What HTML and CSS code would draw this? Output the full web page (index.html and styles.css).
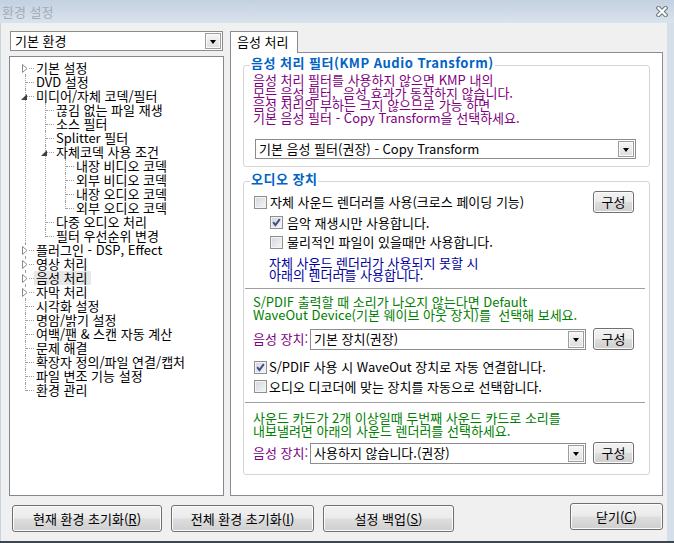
FILE: index.html
```html
<!DOCTYPE html>
<html lang="ko">
<head>
<meta charset="utf-8">
<title>환경 설정</title>
<link rel="stylesheet" href="styles.css">
</head>
<body>
<div class="window">
  <div class="titlebar">
    <span class="title">환경 설정</span>
    <svg class="close" width="12" height="11" viewBox="0 0 12 11">
      <path d="M2.5 2 L9.5 9 M9.5 2 L2.5 9" stroke="#6f7a86" stroke-width="4.4" stroke-linecap="square"/>
      <path d="M2.5 2 L9.5 9 M9.5 2 L2.5 9" stroke="#ffffff" stroke-width="2.2" stroke-linecap="square"/>
    </svg>
  </div>
  <div class="client">
    <div class="main">
      <div class="left">
        <div class="combo combo-env"><span class="combo-text">기본 환경</span><span class="combo-btn"><i class="arrow"></i></span></div>
        <div class="tree">
          <ul class="tv lvl0">
            <li><svg class="exp-c" width="6" height="9" viewBox="0 0 6 9"><path d="M0.5 0.5 L5 4.5 L0.5 8.5 Z" fill="#fff" stroke="#8a8a8a"/></svg><span class="row">기본 설정</span></li>
            <li><span class="row">DVD 설정</span></li>
            <li><svg class="exp-o" width="6" height="6" viewBox="0 0 6 6"><path d="M6 0 L6 6 L0 6 Z" fill="#404040"/></svg><span class="row">미디어/자체 코덱/필터</span>
              <ul class="tv">
                <li><span class="row">끊김 없는 파일 재생</span></li>
                <li><span class="row">소스 필터</span></li>
                <li><span class="row">Splitter 필터</span></li>
                <li><svg class="exp-o" width="6" height="6" viewBox="0 0 6 6"><path d="M6 0 L6 6 L0 6 Z" fill="#404040"/></svg><span class="row">자체코덱 사용 조건</span>
                  <ul class="tv">
                    <li><span class="row">내장 비디오 코덱</span></li>
                    <li><span class="row">외부 비디오 코덱</span></li>
                    <li><span class="row">내장 오디오 코덱</span></li>
                    <li><span class="row">외부 오디오 코덱</span></li>
                  </ul>
                </li>
                <li><span class="row">다중 오디오 처리</span></li>
                <li><span class="row">필터 우선순위 변경</span></li>
              </ul>
            </li>
            <li><svg class="exp-c" width="6" height="9" viewBox="0 0 6 9"><path d="M0.5 0.5 L5 4.5 L0.5 8.5 Z" fill="#fff" stroke="#8a8a8a"/></svg><span class="row">플러그인 - DSP, Effect</span></li>
            <li><svg class="exp-c" width="6" height="9" viewBox="0 0 6 9"><path d="M0.5 0.5 L5 4.5 L0.5 8.5 Z" fill="#fff" stroke="#8a8a8a"/></svg><span class="row">영상 처리</span></li>
            <li><svg class="exp-c" width="6" height="9" viewBox="0 0 6 9"><path d="M0.5 0.5 L5 4.5 L0.5 8.5 Z" fill="#fff" stroke="#8a8a8a"/></svg><span class="row"><span class="sel">음성 처리</span></span></li>
            <li><svg class="exp-c" width="6" height="9" viewBox="0 0 6 9"><path d="M0.5 0.5 L5 4.5 L0.5 8.5 Z" fill="#fff" stroke="#8a8a8a"/></svg><span class="row">자막 처리</span></li>
            <li><span class="row">시각화 설정</span></li>
            <li><span class="row">명암/밝기 설정</span></li>
            <li><span class="row">여백/팬 &amp; 스캔 자동 계산</span></li>
            <li><span class="row">문제 해결</span></li>
            <li><span class="row">확장자 정의/파일 연결/캡처</span></li>
            <li><span class="row">파일 변조 기능 설정</span></li>
            <li><span class="row">환경 관리</span></li>
          </ul>
        </div>
      </div>
      <div class="right">
        <div class="tabs"><div class="tab">음성 처리</div></div>
        <div class="panel">
          <div class="group group1">
            <span class="group-title">음성 처리 필터(KMP Audio Transform)</span>
            <div class="txt purple">음성 처리 필터를 사용하지 않으면 KMP 내의<br>모든 음성 필터,&nbsp; 음성 효과가 동작하지 않습니다.<br>음성 처리의 부하는 크지 않으므로 가능 하면<br>기본 음성 필터 - Copy Transform을 선택하세요.</div>
            <div class="combo combo-filter"><span class="combo-text">기본 음성 필터(권장) - Copy Transform</span><span class="combo-btn"><i class="arrow"></i></span></div>
          </div>
          <div class="group group2">
            <span class="group-title">오디오 장치</span>
            <div class="crow crow-a"><span class="cb"></span><span class="clabel">자체 사운드 렌더러를 사용(크로스 페이딩 기능)</span><button class="btn btn-cfg">구성</button></div>
            <div class="crow crow-b sub"><span class="cb"><svg width="11" height="11" viewBox="0 0 11 11"><path d="M2.2 5.2 L4.4 8 L8.8 2.2" fill="none" stroke="#3b4f8c" stroke-width="2"/></svg></span><span class="clabel">음악 재생시만 사용합니다.</span></div>
            <div class="crow crow-c sub"><span class="cb"></span><span class="clabel">물리적인 파일이 있을때만 사용합니다.</span></div>
            <div class="txt blue">자체 사운드 렌더러가 사용되지 못할 시<br>아래의 렌더러를 사용합니다.</div>
            <div class="sep"></div>
            <div class="txt green green1">S/PDIF 출력할 때 소리가 나오지 않는다면 Default<br>WaveOut Device(기본 웨이브 아웃 장치)를&nbsp; 선택해 보세요.</div>
            <div class="drow">
              <span class="dlabel">음성 장치:</span>
              <div class="combo combo-dev"><span class="combo-text">기본 장치(권장)</span><span class="combo-btn"><i class="arrow"></i></span></div>
              <button class="btn btn-cfg">구성</button>
            </div>
            <div class="crow crow-d"><span class="cb"><svg width="11" height="11" viewBox="0 0 11 11"><path d="M2.2 5.2 L4.4 8 L8.8 2.2" fill="none" stroke="#3b4f8c" stroke-width="2"/></svg></span><span class="clabel">S/PDIF 사용 시 WaveOut 장치로 자동 연결합니다.</span></div>
            <div class="crow crow-e"><span class="cb"></span><span class="clabel">오디오 디코더에 맞는 장치를 자동으로 선택합니다.</span></div>
            <div class="sep sep2"></div>
            <div class="txt green green2">사운드 카드가 2개 이상일때 두번째 사운드 카드로 소리를<br>내보낼려면 아래의 사운드 렌더러를 선택하세요.</div>
            <div class="drow drow2">
              <span class="dlabel">음성 장치:</span>
              <div class="combo combo-dev"><span class="combo-text">사용하지 않습니다.(권장)</span><span class="combo-btn"><i class="arrow"></i></span></div>
              <button class="btn btn-cfg">구성</button>
            </div>
          </div>
        </div>
      </div>
    </div>
    <div class="buttons">
      <button class="btn btn-b1">현재 환경 초기화(<u>R</u>)</button>
      <button class="btn btn-b2">전체 환경 초기화(<u>I</u>)</button>
      <button class="btn btn-b3">설정 백업(<u>S</u>)</button>
      <button class="btn btn-close">닫기(<u>C</u>)</button>
    </div>
  </div>
</div>
</body>
</html>
```

FILE: styles.css
```css
* { box-sizing: border-box; }
html, body { margin: 0; padding: 0; }
body {
  width: 674px;
  height: 543px;
  overflow: hidden;
  font-family: "Noto Sans CJK KR", "Noto Sans", sans-serif;
  font-size: 13px;
  line-height: 14px;
  color: #000;
  background: #f0f0f0;
}
.window {
  width: 674px;
  height: 543px;
  display: flex;
  flex-direction: column;
  border-bottom: 2px solid #3e4650;
  background: #f0f0f0;
}
.titlebar {
  height: 23px;
  flex: none;
  display: flex;
  align-items: center;
  padding-left: 2px;
  background: linear-gradient(#c3d1e0, #d9e3ed);
}
.title { color: #a2acb7; font-size: 13px; line-height: 14px; }
.close { margin-left: auto; margin-right: 6px; }

.client {
  flex: 1;
  border-left: 1px solid #c6d4e2;
  border-right: 7px solid #d5dfea;
  padding: 8px 4px 0 8px;
}
.main { display: flex; gap: 6px; height: 465px; }
.left { width: 215px; display: flex; flex-direction: column; gap: 5px; }
.right { width: 433px; display: flex; flex-direction: column; }

/* combo boxes */
.combo {
  display: flex;
  align-items: center;
  background: #fff;
  border: 1px solid #8c8c8c;
  padding: 1px 1px 1px 3px;
}
.combo-text { flex: 1; line-height: 16px; white-space: nowrap; }
.combo-btn {
  width: 16px;
  flex: none;
  align-self: stretch;
  border: 1px solid #9d9d9d;
  background: linear-gradient(#f6f6f6, #dedede);
  box-shadow: inset 0 0 0 1px #fafafa;
  display: flex;
  align-items: center;
  justify-content: center;
}
.arrow {
  width: 0;
  height: 0;
  border-left: 3.5px solid transparent;
  border-right: 3.5px solid transparent;
  border-top: 4px solid #000;
  margin-top: 1px;
}
.combo-env { height: 20px; margin-left: 1px; margin-right: 1px; }
.combo-env .combo-text { padding-left: 1px; }

/* tree */
.tree {
  height: 440px;
  background: #fff;
  border: 1px solid #828790;
  padding-top: 4px;
}
.tv { list-style: none; margin: 0; padding: 0; }
.tv .tv { margin-left: -6px; }
.tv li { position: relative; padding-left: 26px; }
.tv li::before {
  content: "";
  position: absolute;
  left: 15px;
  top: 0;
  bottom: 0;
  border-left: 1px dotted #a0a0a0;
}
.tv li:last-child::before { bottom: auto; height: 8px; }
.lvl0 > li:first-child::before { top: 7px; }
.tv li::after {
  content: "";
  position: absolute;
  left: 16px;
  top: 7px;
  width: 8px;
  border-top: 1px dotted #a0a0a0;
}
.row { display: block; height: 14px; line-height: 14px; white-space: nowrap; }
.sel { background: #e8e8e8; padding: 0 4px 0 2px; margin-left: -2px; display: inline-block; height: 14px; }
.exp-c { position: absolute; left: 12px; top: 3px; z-index: 1; background: #fff; }
.exp-o { position: absolute; left: 11px; top: 5px; z-index: 1; }

/* tabs */
.tabs { height: 21px; display: flex; }
.tab {
  position: relative;
  z-index: 1;
  width: 68px;
  height: 22px;
  background: #fff;
  border: 1px solid #898c95;
  border-bottom: none;
  padding-left: 6px;
  line-height: 20px;
}
.panel {
  height: 444px;
  background: #fff;
  border: 1px solid #898c95;
  padding: 12px 12px 0 12px;
}

/* group boxes */
.group {
  position: relative;
  width: 407px;
  border: 1px solid #d5d5d5;
  border-radius: 3px;
}
.group-title {
  position: absolute;
  top: -10px;
  left: 6px;
  padding: 0 1px;
  background: #fff;
  color: #0063c6;
  font-weight: bold;
  letter-spacing: 0.5px;
  line-height: 14px;
  white-space: nowrap;
}
.group1 { padding: 8px 9px 7px 9px; }
.group2 { margin-top: 14px; padding: 9px 15px 10px 10px; }

.txt { white-space: nowrap; }
.purple { color: #800080; line-height: 12.5px; }
.blue { color: #0000a0; line-height: 12px; margin-top: 5px; margin-left: 15px; }
.green { color: #008000; line-height: 12.5px; margin-left: -1px; }
.green1 { margin-top: 7px; }
.green2 { margin-top: 9px; }

.combo-filter { width: 381px; height: 20px; margin-top: 15px; margin-left: 2px; }

.sep { border-top: 1px solid #a0a0a0; margin: 7px -11px 0 -9px; }
.sep2 { margin-top: 6px; }

/* check rows */
.crow { display: flex; align-items: center; white-space: nowrap; }
.crow-a { height: 22px; }
.crow-b { height: 19px; }
.crow-c { height: 20px; }
.crow-d { height: 20px; margin-top: 7px; }
.crow-e { height: 19px; }
.sub { margin-left: 16px; }
.cb {
  width: 13px;
  height: 13px;
  flex: none;
  border: 1px solid #8e8f8f;
  background: linear-gradient(135deg, #d2d5da 0%, #f6f6f6 100%);
  box-shadow: inset 0 0 0 1px #f3f3f3;
  display: flex;
  align-items: center;
  justify-content: center;
}
.clabel { margin-left: 3px; line-height: 14px; }
.sub .clabel { margin-left: 4px; }
.crow-d .clabel, .crow-e .clabel { margin-left: 2px; }

/* device rows */
.drow { display: flex; align-items: center; height: 22px; margin-top: 7px; }
.drow2 { margin-top: 5px; }
.dlabel { width: 57px; margin-left: -1px; color: #800080; flex: none; white-space: nowrap; }
.combo-dev { width: 276px; height: 21px; }

/* buttons */
.btn {
  font-family: "Noto Sans CJK KR", "Noto Sans", sans-serif;
  font-size: 13px;
  line-height: 14px;
  color: #000;
  padding: 0;
  border: 1px solid #707070;
  border-radius: 3px;
  background: linear-gradient(#f2f2f2 0%, #ebebeb 48%, #dddddd 52%, #cfcfcf 100%);
  box-shadow: inset 0 0 0 1px #fbfbfb;
  white-space: nowrap;
}
.btn u { text-underline-offset: 1px; }
.btn-cfg { width: 41px; height: 22px; margin-left: auto; flex: none; }

.buttons { display: flex; align-items: flex-start; margin-top: 7px; }
.btn-b1 { width: 150px; height: 27px; margin-left: 3px; margin-top: 2px; }
.btn-b2 { width: 143px; height: 27px; margin-left: 9px; margin-top: 2px; }
.btn-b3 { width: 131px; height: 27px; margin-left: 9px; margin-top: 2px; }
.btn-close { width: 93px; height: 27px; margin-left: auto; }
```
